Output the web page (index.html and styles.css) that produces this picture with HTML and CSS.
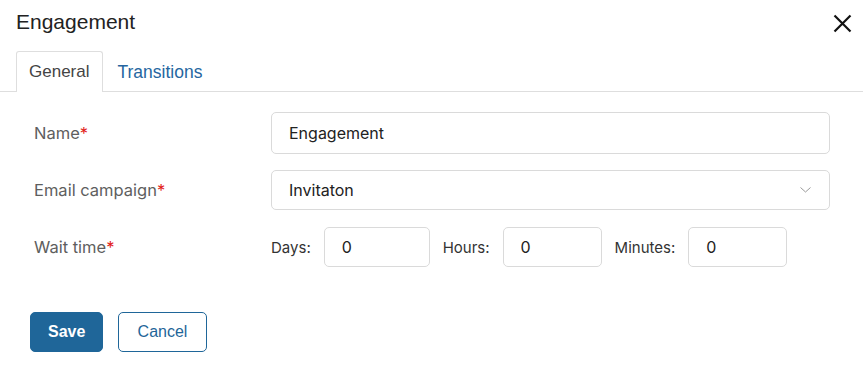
FILE: index.html
```html
<!DOCTYPE html>
<html lang="en">
  <head>
    <meta charset="UTF-8" />
    <meta name="viewport" content="width=device-width, initial-scale=1.0" />
    <title>Engagement</title>
    <link rel="stylesheet" href="styles.css">
  </head>
  <body>
    <div class="dialog">
      <div class="dialog-header">
        <h1 class="dialog-title">Engagement</h1>
        <button class="close" aria-label="Close">
          <svg width="19" height="19" viewBox="0 0 19 19">
            <path d="M1.5 1.5 L17.5 17.5 M17.5 1.5 L1.5 17.5" stroke="#111" stroke-width="2.2" fill="none" />
          </svg>
        </button>
      </div>

      <div class="tabs">
        <div class="tab active">General</div>
        <div class="tab">Transitions</div>
      </div>

      <div class="form">
        <div class="label">Name<span class="req">*</span></div>
        <input type="text" class="field field-tall" value="Engagement" />

        <div class="label">Email campaign<span class="req">*</span></div>
        <div class="field select">
          <span>Invitaton</span>
          <svg width="11" height="6" viewBox="0 0 11 6">
            <path d="M0.5 0.5 L5.5 5 L10.5 0.5" stroke="#9a9a9a" stroke-width="1" fill="none" />
          </svg>
        </div>

        <div class="label">Wait time<span class="req">*</span></div>
        <div class="wait">
          <span class="unit">Days:</span>
          <input type="text" class="field days" value="0" />
          <span class="unit">Hours:</span>
          <input type="text" class="field small" value="0" />
          <span class="unit">Minutes:</span>
          <input type="text" class="field small" value="0" />
        </div>
      </div>

      <div class="actions">
        <button class="btn btn-primary">Save</button>
        <button class="btn btn-outline">Cancel</button>
      </div>
    </div>
  </body>
</html>
```

FILE: styles.css
```css
* {
  box-sizing: border-box;
}
body {
  margin: 0;
  background: #fff;
  font-family: Inter, "Noto Sans", sans-serif;
}
.dialog-header {
  display: flex;
  justify-content: space-between;
  align-items: flex-start;
  height: 51px;
  padding: 9px 11px 0 16px;
}
.dialog-title {
  margin: 0;
  font: 400 21px/25px "Liberation Sans", Arial, sans-serif;
  color: #222;
}
.close {
  width: 19px;
  height: 19px;
  margin-top: 5px;
  padding: 0;
  border: 0;
  background: none;
  display: flex;
}
.tabs {
  display: flex;
  padding-left: 16px;
  border-bottom: 1px solid #dedede;
  height: 41px;
}
.tab {
  height: 40px;
  line-height: 40px;
  padding: 0 13px 0 12px;
  font-family: "Liberation Sans", Arial, sans-serif;
  font-size: 17px;
  color: #2566a0;
  border: 1px solid transparent;
  border-bottom: 0;
  border-radius: 3px 3px 0 0;
}
.tab + .tab {
  padding-left: 13px;
  font-size: 17.5px;
}
.tab.active {
  height: 41px;
  color: #444;
  background: #fff;
  border-color: #dedede;
}
.form {
  display: grid;
  grid-template-columns: 241px 1fr;
  row-gap: 16px;
  padding: 20px 33px 0 30px;
}
.label {
  align-self: center;
  padding-left: 4px;
  font-size: 16.5px;
  color: #5e5e5e;
}
.req {
  color: #e2231a;
}
.field {
  height: 40px;
  padding: 0 17px;
  border: 1px solid #dadada;
  border-radius: 5px;
  font-family: Inter, sans-serif;
  font-size: 16px;
  color: #222;
  background: #fff;
  outline: none;
}
.field-tall {
  height: 42px;
  width: 100%;
}
.select {
  display: flex;
  align-items: center;
  justify-content: space-between;
  padding-right: 18px;
}
.wait {
  display: flex;
  align-items: center;
  gap: 13px;
  margin-top: 1px;
}
.unit {
  font-size: 15px;
  color: #333;
}
.days {
  width: 106px;
}
.small {
  width: 99px;
}
.actions {
  display: flex;
  gap: 15px;
  padding: 45px 30px 20px;
}
.btn {
  height: 40px;
  border-radius: 5px;
  font-family: "Liberation Sans", Arial, sans-serif;
  font-size: 16px;
  padding: 0 17px;
}
.btn-primary {
  width: 73px;
  background: #1f6699;
  border: 1px solid #1f6699;
  color: #fff;
  font-weight: bold;
}
.btn-outline {
  width: 89px;
  background: #fff;
  border: 1px solid #1f6699;
  color: #1f6699;
}
```
